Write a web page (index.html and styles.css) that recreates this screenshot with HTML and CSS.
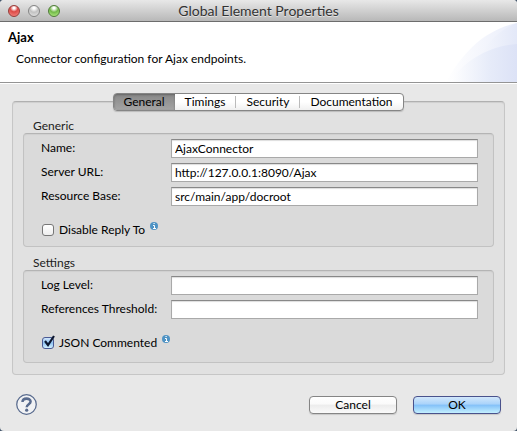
FILE: index.html
```html
<!DOCTYPE html>
<html lang="en">
<head>
<meta charset="utf-8">
<title>Global Element Properties</title>
<link rel="stylesheet" href="styles.css">
</head>
<body>
<div class="window">
  <header class="titlebar">
    <div class="lights">
      <button class="light red" aria-label="Close"></button>
      <button class="light gray" aria-label="Minimize"></button>
      <button class="light green" aria-label="Zoom"></button>
    </div>
    <h1 class="title">Global Element Properties</h1>
  </header>
  <section class="banner">
    <svg class="swoosh" viewBox="0 0 75 60" aria-hidden="true">
      <defs>
        <linearGradient id="a"><stop offset="0" stop-color="#fff"/><stop offset="1" stop-color="#e9edfa"/></linearGradient>
        <linearGradient id="b"><stop offset="0" stop-color="#fafbfe"/><stop offset="1" stop-color="#e3e8f8"/></linearGradient>
        <linearGradient id="c"><stop offset="0" stop-color="#fff"/><stop offset="0.6" stop-color="#e6ebf9"/><stop offset="1" stop-color="#dce2f6"/></linearGradient>
      </defs>
      <path d="M4 60C19 33 41 8 75 1V60Z" fill="url(#a)"/>
      <path d="M27 60C35 31 53 9 75 1V60Z" fill="url(#b)"/>
      <path d="M8 60C22 38 48 24 75 22V60Z" fill="url(#c)"/>
    </svg>
    <h2 class="heading">Ajax</h2>
    <p class="description">Connector configuration for Ajax endpoints.</p>
  </section>
  <main class="content">
    <nav class="tabs" role="tablist">
      <button class="tab selected" role="tab" aria-selected="true">General</button>
      <button class="tab" role="tab" aria-selected="false">Timings</button>
      <button class="tab" role="tab" aria-selected="false">Security</button>
      <button class="tab" role="tab" aria-selected="false">Documentation</button>
    </nav>
    <div class="panel">
      <section class="section">
        <h3 class="legend">Generic</h3>
        <div class="group">
          <div class="row"><label for="name">Name:</label><input class="field" id="name" type="text" value="AjaxConnector"></div>
          <div class="row"><label for="url">Server URL:</label><input class="field" id="url" type="text" value="http://127.0.0.1:8090/Ajax"></div>
          <div class="row"><label for="base">Resource Base:</label><input class="field" id="base" type="text" value="src/main/app/docroot"></div>
          <div class="option">
            <input class="check" id="reply" type="checkbox"><label for="reply">Disable Reply To</label>
            <svg class="info" viewBox="0 0 8 8" aria-hidden="true"><circle cx="4" cy="4" r="4" fill="#4f93c4"/><path d="M3 3.5h1.5v3M3 6.5h3M3.5 1.5h1.2" fill="none" stroke="#fff"/></svg>
          </div>
        </div>
      </section>
      <section class="section">
        <h3 class="legend">Settings</h3>
        <div class="group roomy">
          <div class="row"><label for="log">Log Level:</label><input class="field" id="log" type="text"></div>
          <div class="row"><label for="threshold">References Threshold:</label><input class="field" id="threshold" type="text"></div>
          <div class="option">
            <span class="checkwrap"><input class="check" id="json" type="checkbox" checked><svg class="tick" viewBox="0 0 14 14" aria-hidden="true"><path d="M3 7L6 11L12 2" fill="none" stroke="#0c1730" stroke-width="2.2"/></svg></span><label for="json">JSON Commented</label>
            <svg class="info" viewBox="0 0 8 8" aria-hidden="true"><circle cx="4" cy="4" r="4" fill="#4f93c4"/><path d="M3 3.5h1.5v3M3 6.5h3M3.5 1.5h1.2" fill="none" stroke="#fff"/></svg>
          </div>
        </div>
      </section>
    </div>
  </main>
  <footer class="footer">
    <button class="help" aria-label="Help">
      <svg viewBox="0 0 20 20" aria-hidden="true"><circle cx="10" cy="10" r="9.3" fill="#f1f2f4" stroke="#596b8e" stroke-width="1.2"/><path d="M6.2 7.6C6.2 3.4 13.9 3.4 13.9 7.2C13.9 9.8 10.2 9.6 10.2 12.6" fill="none" stroke="#596b8e" stroke-width="2.4"/><circle cx="10.2" cy="15.4" r="1.5" fill="#596b8e"/></svg>
    </button>
    <button class="push">Cancel</button>
    <button class="push primary">OK</button>
  </footer>
</div>
</body>
</html>
```
FILE: styles.css
```css
* { box-sizing: border-box; }
body {
  margin: 0;
  background: #44566b;
  color: #000;
  font: 12px/16px Lato, "Liberation Sans", sans-serif;
}
h1, h2, h3, p { margin: 0; font-size: inherit; }
button, input { font: inherit; color: inherit; margin: 0; }
button { padding: 0; }

.window {
  display: flex;
  flex-direction: column;
  min-height: 100vh;
  background: #e8e8e8;
  border-radius: 4px;
  overflow: hidden;
}
.titlebar {
  display: grid;
  grid-template-columns: 1fr auto 1fr;
  align-items: center;
  height: 22px;
  padding: 0 8px;
  background: linear-gradient(#e8e8e8, #b8b8b8);
  border-bottom: 1px solid #6d6d6d;
}
.lights { display: flex; gap: 8px; }
.light {
  width: 12px;
  height: 12px;
  border: 1px solid #858585;
  border-radius: 50%;
}
.red { background: radial-gradient(circle at 50% 20%, #fff 0 10%, #dc4a46 40%, #f98e88); border-color: #963c39; }
.gray { background: radial-gradient(circle at 50% 20%, #fff 0 10%, #c2c2c2 45%, #e8e8e8); }
.green { background: radial-gradient(circle at 50% 20%, #fff 0 10%, #72b949 45%, #bdf58c); border-color: #4f7b38; }
.title {
  font-size: 14px;
  line-height: 20px;
  font-weight: 400;
  color: #333;
  text-shadow: 0 1px 0 #e4e4e4;
}

.banner {
  position: relative;
  height: 61px;
  padding: 7px 8px;
  background: #fff;
  border-bottom: 1px solid #949494;
}
.heading { position: relative; font-size: 13px; font-weight: 700; }
.description { position: relative; margin-top: 6px; padding-left: 8px; }
.swoosh { position: absolute; right: 0; top: 0; width: 75px; height: 60px; }

.content {
  display: flex;
  flex-direction: column;
  padding: 9px 12px 0;
  border-top: 1px solid #fff;
}
.tabs {
  display: flex;
  align-self: center;
  position: relative;
  height: 18px;
  margin-bottom: -10px;
  border: 1px solid #858585;
  border-radius: 4px;
  background: linear-gradient(#fff 50%, #f0f0f0);
  box-shadow: 0 1px 1px #bbb;
}
.tab {
  padding: 0 10px;
  border: 0;
  background: none;
  line-height: 16px;
  font-size: 12px;
}
.tab + .tab + .tab {
  padding-left: 11px;
  background: linear-gradient(#bbb, #bbb) 0 50% / 1px 12px no-repeat;
}
.tab.selected {
  padding: 0 10px 0 9px;
  background: linear-gradient(#888, #a4a4a4);
  border-radius: 3px 0 0 3px;
  box-shadow: inset 0 1px 2px #666;
}
.panel {
  padding: 16px 10px 11px;
  background: #e1e1e1;
  border: 1px solid #c6c6c6;
  border-top: 1px solid #b0b0b0;
  border-radius: 4px;
  box-shadow: inset 0 1px 1px #cfcfcf;
}
.section + .section { margin-top: 8px; }
.legend { padding-left: 10px; line-height: 15px; font-weight: 400; color: #222; }
.group {
  padding: 5px 15px 8px 17px;
  background: #dadada;
  border: 1px solid #c2c2c2;
  border-top-color: #b4b4b4;
  border-radius: 4px;
  box-shadow: inset 0 1px 1px #cfcfcf;
}
.roomy { padding-bottom: 11px; }
.row {
  display: grid;
  grid-template-columns: 130px 1fr;
  align-items: start;
  height: 19px;
  line-height: 18px;
}
.row + .row { margin-top: 5px; }
.field {
  width: 100%;
  height: 19px;
  padding: 0 3px;
  background: #fff;
  border: 1px solid #a9a9a9;
  border-top-color: #888;
  box-shadow: inset 0 1px 1px #ddd;
  outline: 0;
}
.option { display: flex; align-items: center; gap: 5px; margin-top: 16px; padding-left: 1px; height: 16px; }
.check {
  appearance: none;
  display: block;
  width: 12px;
  height: 12px;
  border: 1px solid #777;
  border-radius: 3px;
  background: linear-gradient(#fff, #eee);
}
.check:checked { background: linear-gradient(#cfe4fa, #8fc3f3 50%, #d3f1ff); border-color: #4a5a94; }
.checkwrap { position: relative; }
.tick { position: absolute; left: 0; top: -3px; width: 14px; height: 14px; }
.info { width: 8px; height: 8px; align-self: flex-start; }

.footer { display: flex; align-items: center; gap: 16px; padding: 19px 16px 16px; }
.help { width: 21px; height: 21px; margin-right: auto; border: 0; background: none; }
.help svg { display: block; }
.push {
  width: 88px;
  height: 18px;
  border: 1px solid #858585;
  border-radius: 4px;
  background: linear-gradient(#fff, #fafafa 45%, #ececec 50%, #fafafa);
  box-shadow: 0 1px 1px #c8c8c8;
  line-height: 16px;
}
.primary {
  border-color: #4a528c;
  background: linear-gradient(#d2e7fb, #a9d3fa 45%, #82c0f8 50%, #c4f0ff);
}
```
